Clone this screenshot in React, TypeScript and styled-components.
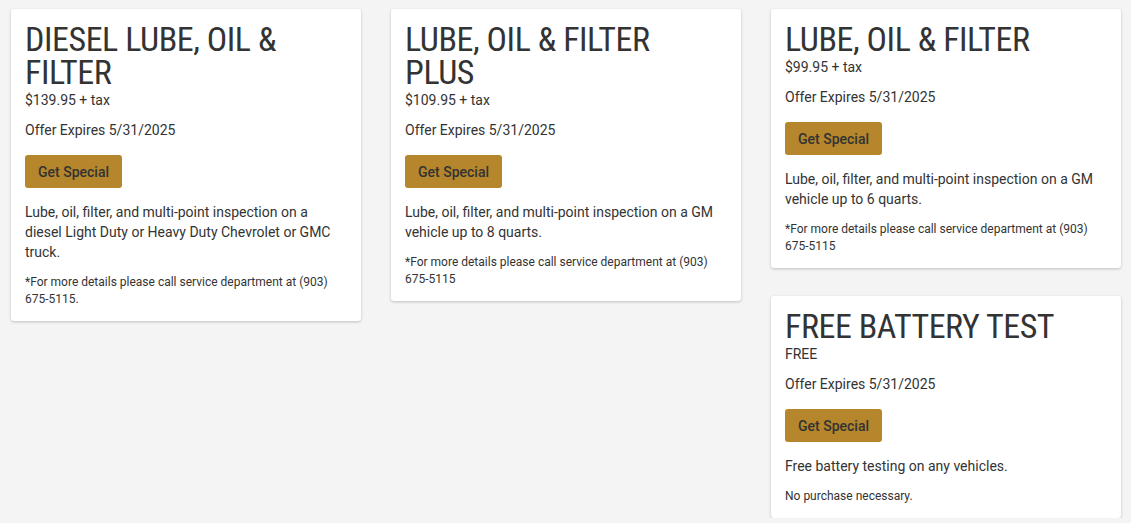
import React from "react";
import styled, { createGlobalStyle } from "styled-components";

const Global = createGlobalStyle`
  html, body { margin: 0; padding: 0; background: #f4f4f4; }
  body { font-family: Roboto, "Liberation Sans", Arial, sans-serif; color: #333; }
`;

const Page = styled.div`
  display: flex;
  align-items: flex-start;
  gap: 30px;
  padding: 9px 10px 0 11px;
`;

const Column = styled.div`
  display: flex;
  flex-direction: column;
  gap: 28px;
  width: 350px;
  flex: 0 0 350px;
`;

const Card = styled.div`
  background: #fff;
  border-radius: 3px;
  box-shadow: 0 1px 3px rgba(0, 0, 0, 0.22);
  padding: 14px 20px 13px 14px;
`;

const Title = styled.h2`
  margin: 0;
  font-family: "Roboto Condensed", Roboto, sans-serif;
  font-stretch: condensed;
  font-weight: 400;
  font-size: 34px;
  line-height: 33px;
  letter-spacing: -0.45px;
  color: #333;
  text-transform: uppercase;
`;

const Price = styled.div`
  margin-top: 1px;
  font-size: 14px;
  line-height: 20px;
`;

const Expires = styled.div`
  margin-top: 10px;
  font-size: 14px;
  line-height: 20px;
`;

const Button = styled.button`
  display: block;
  margin-top: 15px;
  height: 33px;
  padding: 0 13px;
  border: none;
  border-radius: 3px;
  background: #b5862c;
  color: #333;
  font-family: Roboto, sans-serif;
  font-weight: 500;
  font-size: 14px;
  cursor: pointer;
`;

const Desc = styled.p`
  margin: 14px 0 0;
  font-size: 14px;
  line-height: 20px;
`;

const Note = styled.p`
  margin: 12px 0 0;
  font-size: 12px;
  line-height: 17px;
`;

type Special = {
  title: string;
  price: string;
  desc: string;
  note: string;
};

const SpecialCard = ({ s }: { s: Special }) => (
  <Card>
    <Title>{s.title}</Title>
    <Price>{s.price}</Price>
    <Expires>Offer Expires 5/31/2025</Expires>
    <Button>Get Special</Button>
    <Desc>{s.desc}</Desc>
    <Note>{s.note}</Note>
  </Card>
);

const columns: Special[][] = [
  [
    {
      title: "Diesel Lube, Oil & Filter",
      price: "$139.95 + tax",
      desc: "Lube, oil, filter, and multi-point inspection on a diesel Light Duty or Heavy Duty Chevrolet or GMC truck.",
      note: "*For more details please call service department at (903) 675-5115.",
    },
  ],
  [
    {
      title: "Lube, Oil & Filter Plus",
      price: "$109.95 + tax",
      desc: "Lube, oil, filter, and multi-point inspection on a GM vehicle up to 8 quarts.",
      note: "*For more details please call service department at (903) 675-5115",
    },
  ],
  [
    {
      title: "Lube, Oil & Filter",
      price: "$99.95 + tax",
      desc: "Lube, oil, filter, and multi-point inspection on a GM vehicle up to 6 quarts.",
      note: "*For more details please call service department at (903) 675-5115",
    },
    {
      title: "Free Battery Test",
      price: "FREE",
      desc: "Free battery testing on any vehicles.",
      note: "No purchase necessary.",
    },
  ],
];

export default function App() {
  return (
    <>
      <Global />
      <Page>
        {columns.map((col, i) => (
          <Column key={i}>
            {col.map((s) => (
              <SpecialCard key={s.title} s={s} />
            ))}
          </Column>
        ))}
      </Page>
    </>
  );
}
